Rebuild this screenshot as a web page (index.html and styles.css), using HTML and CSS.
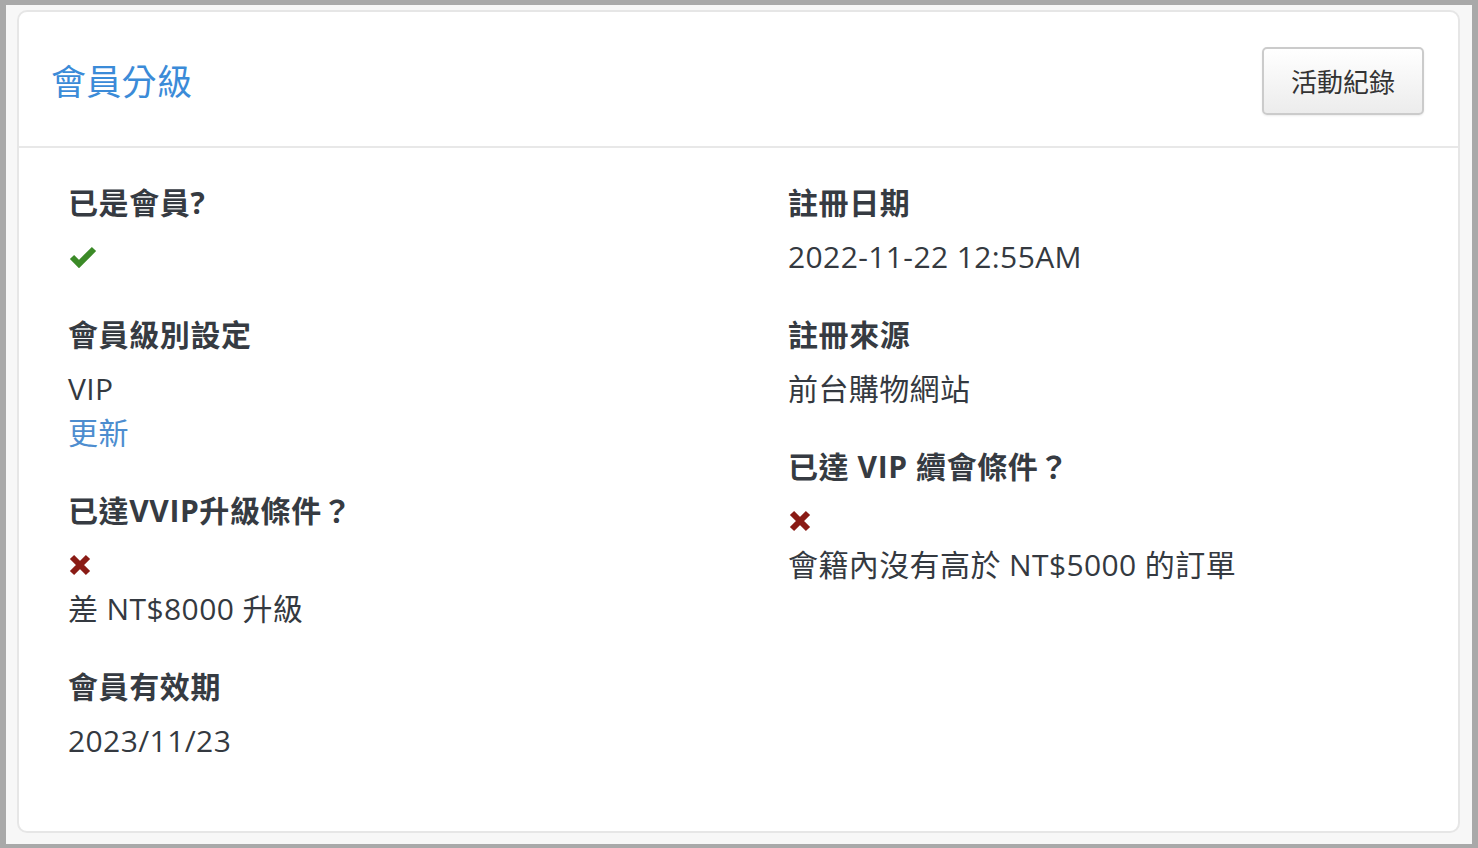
FILE: index.html
```html
<!DOCTYPE html>
<html lang="zh-Hant">
<head>
  <meta charset="UTF-8" />
  <title>會員分級</title>
  <link rel="stylesheet" href="styles.css">
</head>
<body>
  <div class="frame">
    <div class="panel">
      <div class="panel-head">
        <h2 class="panel-title">會員分級</h2>
        <button class="btn">活動紀錄</button>
      </div>

      <div class="panel-body">
        <div class="col">
          <div class="field">
            <div class="label">已是會員?</div>
            <div class="value">
              <svg class="icon-ok" width="28" height="22" viewBox="0 0 28 22"><polyline points="3,11 10,18 25,3" fill="none" stroke="#3b8a27" stroke-width="6" /></svg>
            </div>
          </div>
          <div class="field">
            <div class="label">會員級別設定</div>
            <div class="value">VIP</div>
            <div class="value"><a class="link" href="#">更新</a></div>
          </div>
          <div class="field">
            <div class="label">已達VVIP升級條件？</div>
            <div class="value">
              <svg class="icon-no" width="22" height="22" viewBox="0 0 22 22"><path d="M3 3 L19 19 M19 3 L3 19" stroke="#8a1b15" stroke-width="6" /></svg>
            </div>
            <div class="value">差 NT$8000 升級</div>
          </div>
          <div class="field">
            <div class="label">會員有效期</div>
            <div class="value">2023/11/23</div>
          </div>
        </div>

        <div class="col">
          <div class="field">
            <div class="label">註冊日期</div>
            <div class="value">2022-11-22 12:55AM</div>
          </div>
          <div class="field">
            <div class="label">註冊來源</div>
            <div class="value">前台購物網站</div>
          </div>
          <div class="field">
            <div class="label">已達 VIP 續會條件？</div>
            <div class="value">
              <svg class="icon-no" width="22" height="22" viewBox="0 0 22 22"><path d="M3 3 L19 19 M19 3 L3 19" stroke="#8a1b15" stroke-width="6" /></svg>
            </div>
            <div class="value">會籍內沒有高於 NT$5000 的訂單</div>
          </div>
        </div>
      </div>
    </div>
  </div>
</body>
</html>
```

FILE: styles.css
```css
html, body {
  margin: 0;
  padding: 0;
}

body {
  font-family: "Open Sans", "Noto Sans CJK TC", sans-serif;
  color: #343940;
}

.frame {
  box-sizing: border-box;
  width: 1478px;
  height: 848px;
  border-style: solid;
  border-color: #a9a9a9;
  border-width: 5px 6px 4px 6px;
  background: #f7f7f7;
  padding: 5px 12px 11px 11px;
}

.panel {
  box-sizing: border-box;
  height: 100%;
  background: #fff;
  border: 2px solid #e6e6e6;
  border-radius: 10px;
}

.panel-head {
  height: 134px;
  display: flex;
  align-items: center;
  justify-content: space-between;
  padding: 0 34px 0 33px;
  border-bottom: 2px solid #e8e8e8;
}

.panel-title {
  margin: 0 0 0 -1px;
  font-size: 35px;
  font-weight: normal;
  letter-spacing: 0.3px;
  color: #3b8bd8;
}

.btn {
  width: 162px;
  height: 68px;
  margin-top: 3px;
  font-family: "Open Sans", "Noto Sans CJK TC", sans-serif;
  font-size: 26px;
  color: #333;
  background: linear-gradient(#ffffff, #ececec);
  border: 2px solid #cbcbcb;
  border-radius: 5px;
  box-shadow: 0 1px 2px rgba(0, 0, 0, 0.08);
}

.panel-body {
  display: grid;
  grid-template-columns: 720px 1fr;
  padding: 33px 0 0 49px;
}

.field {
  margin-bottom: 34px;
}

.label {
  font-size: 30px;
  font-weight: bold;
  line-height: 44px;
  letter-spacing: 0.6px;
  margin-bottom: 10px;
  color: #363b42;
}

.value {
  font-size: 30px;
  line-height: 44px;
  height: 44px;
  letter-spacing: 0.4px;
  display: flex;
  align-items: center;
}

.link {
  color: #4d8dcf;
  text-decoration: none;
}

.icon-ok {
  margin-left: 1px;
}

.icon-no {
  margin-left: 1px;
}
```
